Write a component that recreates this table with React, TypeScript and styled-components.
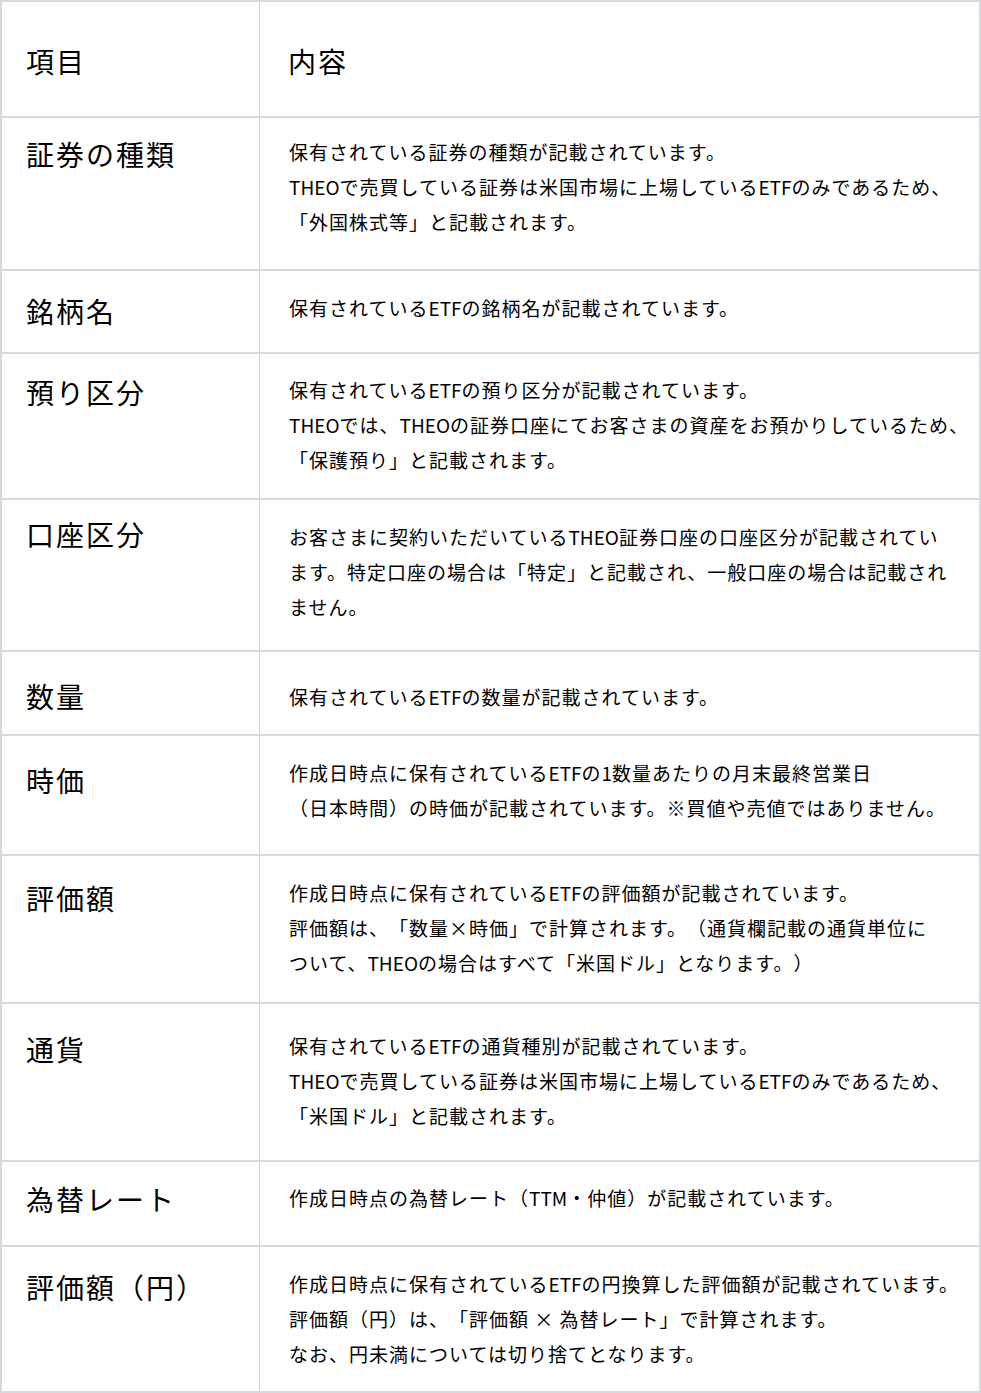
import React from "react";
import styled, { createGlobalStyle } from "styled-components";

const Global = createGlobalStyle`
  html, body { margin: 0; padding: 0; background: #ffffff; }
  body {
    font-family: "Noto Sans CJK JP", "Noto Sans", sans-serif;
    color: #000000;
    text-spacing-trim: space-all;
  }
  * { box-sizing: border-box; }
`;

const Table = styled.div`
  width: 100%;
  border: 2px solid #d6dae0;
  display: flex;
  flex-direction: column;
  background: #ffffff;
`;

const Row = styled.div<{ $h: number; $first?: boolean }>`
  display: grid;
  grid-template-columns: 258px 1fr;
  height: ${(p) => p.$h}px;
  border-top: ${(p) => (p.$first ? "none" : "2px solid #d6dae0")};
`;

const LabelCell = styled.div<{ $pt: number }>`
  border-right: 1px solid #cfd3d8;
  padding: ${(p) => p.$pt}px 0 0 24px;
  font-size: 28px;
  line-height: 40px;
  letter-spacing: 2px;
  white-space: nowrap;
`;

const HeadText = styled.div<{ $pt: number }>`
  padding: ${(p) => p.$pt}px 0 0 28px;
  font-size: 28px;
  line-height: 40px;
  letter-spacing: 2px;
`;

const TextCell = styled.div<{ $pt: number }>`
  padding: ${(p) => p.$pt}px 0 0 29px;
  font-size: 19px;
  line-height: 35px;
  letter-spacing: 1px;
`;

const Line = styled.span`
  display: block;
  white-space: nowrap;
`;

const Latin = styled.span`
  letter-spacing: 0;
`;

type RowData = { label: string; lines: string[]; h: number; lt: number; tt: number };

const rows: RowData[] = [
  {
    label: "証券の種類",
    lines: [
      "保有されている証券の種類が記載されています。",
      "THEOで売買している証券は米国市場に上場しているETFのみであるため、",
      "「外国株式等」と記載されます。",
    ],
    h: 153,
    lt: 39,
    tt: 36,
  },
  {
    label: "銘柄名",
    lines: ["保有されているETFの銘柄名が記載されています。"],
    h: 83,
    lt: 43,
    tt: 39,
  },
  {
    label: "預り区分",
    lines: [
      "保有されているETFの預り区分が記載されています。",
      "THEOでは、THEOの証券口座にてお客さまの資産をお預かりしているため、",
      "「保護預り」と記載されます。",
    ],
    h: 146,
    lt: 41,
    tt: 38,
  },
  {
    label: "口座区分",
    lines: [
      "お客さまに契約いただいているTHEO証券口座の口座区分が記載されてい",
      "ます。特定口座の場合は「特定」と記載され、一般口座の場合は記載され",
      "ません。",
    ],
    h: 152,
    lt: 37,
    tt: 39,
  },
  {
    label: "数量",
    lines: ["保有されているETFの数量が記載されています。"],
    h: 84,
    lt: 47,
    tt: 47,
  },
  {
    label: "時価",
    lines: [
      "作成日時点に保有されているETFの1数量あたりの月末最終営業日",
      "（日本時間）の時価が記載されています。※買値や売値ではありません。",
    ],
    h: 120,
    lt: 47,
    tt: 39,
  },
  {
    label: "評価額",
    lines: [
      "作成日時点に保有されているETFの評価額が記載されています。",
      "評価額は、「数量×時価」で計算されます。（通貨欄記載の通貨単位に",
      "ついて、THEOの場合はすべて「米国ドル」となります。）",
    ],
    h: 148,
    lt: 45,
    tt: 39,
  },
  {
    label: "通貨",
    lines: [
      "保有されているETFの通貨種別が記載されています。",
      "THEOで売買している証券は米国市場に上場しているETFのみであるため、",
      "「米国ドル」と記載されます。",
    ],
    h: 158,
    lt: 48,
    tt: 44,
  },
  {
    label: "為替レート",
    lines: ["作成日時点の為替レート（TTM・仲値）が記載されています。"],
    h: 85,
    lt: 40,
    tt: 38,
  },
  {
    label: "評価額（円）",
    lines: [
      "作成日時点に保有されているETFの円換算した評価額が記載されています。",
      "評価額（円）は、「評価額 × 為替レート」で計算されます。",
      "なお、円未満については切り捨てとなります。",
    ],
    h: 146,
    lt: 43,
    tt: 39,
  },
];

function renderLine(text: string) {
  return text.split(/([A-Za-z0-9]+)/).map((part, i) =>
    /^[A-Za-z0-9]+$/.test(part) ? <Latin key={i}>{part}</Latin> : part
  );
}

export default function App() {
  return (
    <>
      <Global />
      <Table>
        <Row $h={114} $first>
          <LabelCell $pt={39}>項目</LabelCell>
          <HeadText $pt={39}>内容</HeadText>
        </Row>
        {rows.map((r) => (
          <Row key={r.label} $h={r.h}>
            <LabelCell $pt={Math.round(r.lt - 2 - 20 - 1)}>{r.label}</LabelCell>
            <TextCell $pt={Math.round(r.tt - 2 - 17.5 - 1)}>
              {r.lines.map((l, i) => (
                <Line key={i}>{renderLine(l)}</Line>
              ))}
            </TextCell>
          </Row>
        ))}
      </Table>
    </>
  );
}
